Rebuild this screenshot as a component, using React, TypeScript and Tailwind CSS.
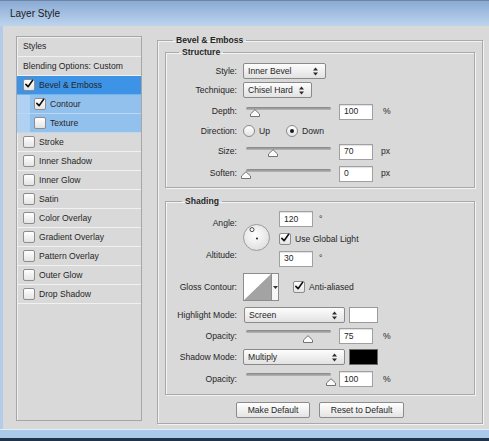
import React from "react";

type Children = { children?: React.ReactNode };

const Check = ({ checked }: { checked?: boolean }) => (
  <span className="flex h-[12px] w-[12px] shrink-0 items-center justify-center rounded-[2px] border border-[#8d8d8d] bg-gradient-to-b from-white to-[#e4e4e4]">
    {checked && (
      <svg width="12" height="12" viewBox="0 0 12 12" className="-mt-[2px]">
        <path d="M2.2 6.4 L4.9 9.2 L10.4 1.6" fill="none" stroke="#111" strokeWidth="1.9" strokeLinecap="round" strokeLinejoin="round" />
      </svg>
    )}
  </span>
);

type Variant = "plain" | "active" | "sub";

const ListRow = ({ label, checked, variant = "plain", hasBox = true }: { label: string; checked?: boolean; variant?: Variant; hasBox?: boolean }) => {
  const cls =
    variant === "active"
      ? "bg-[#3d93e6] border-[#74b2ee]"
      : variant === "sub"
      ? "bg-[#93c1ee] border-[#bad7f3]"
      : "border-[#f1f1f1]";
  return (
    <div className={`flex h-[19px] items-center border-b ${cls}`}>
      {variant === "sub" ? (
        <div className="h-full w-[13px] shrink-0 bg-[#b0d1f1]" />
      ) : null}
      <div className={variant === "sub" ? "ml-[4px] flex items-center" : "ml-[6px] flex items-center"}>
        {hasBox && <Check checked={checked} />}
        <span className={hasBox ? "ml-[4px]" : ""}>{label}</span>
      </div>
    </div>
  );
};

const UpDown = () => (
  <svg width="5" height="9" viewBox="0 0 5 9">
    <path d="M0 3.6 L2.5 0.6 L5 3.6 Z" fill="#2a2a2a" />
    <path d="M0 5.4 L2.5 8.4 L5 5.4 Z" fill="#2a2a2a" />
  </svg>
);

const Select = ({ value, w }: { value: string; w: string }) => (
  <div className={`flex h-[16px] items-center justify-between rounded-[2px] border border-[#8a8a8a] bg-gradient-to-b from-[#fdfdfd] to-[#e2e2e2] pl-[4px] pr-[7px] ${w}`}>
    <span>{value}</span>
    <UpDown />
  </div>
);

const Input = ({ v }: { v: string }) => (
  <div className="flex h-[16px] w-[34px] shrink-0 items-center border border-[#a0a0a0] bg-white pl-[4px] shadow-[inset_0_1px_1px_rgba(0,0,0,0.12)]">
    {v}
  </div>
);

const Slider = ({ pct }: { pct: number }) => (
  <div className="relative h-[16px] w-[91px] shrink-0">
    <div className="mx-[3px] mt-[3px] h-[3px] rounded-full bg-gradient-to-b from-[#858585] to-[#b8b8b8]" />
    <svg className="absolute top-[5px]" style={{ left: 3 + (pct * 85) / 100 - 5 }} width="10" height="8" viewBox="0 0 10 8">
      <path d="M0.5 7.5 L0.5 5 L5 0.7 L9.5 5 L9.5 7.5 Z" fill="#fbfbfb" stroke="#747474" strokeWidth="1" />
    </svg>
  </div>
);

const Row = ({ label, h, children }: { label: string; h: string } & Children) => (
  <div className={`flex items-center ${h}`}>
    <span className="w-[71px] shrink-0 text-right">{label}</span>
    <div className="ml-[6px] flex items-center">{children}</div>
  </div>
);

const Radio = ({ on }: { on?: boolean }) => (
  <span className="flex h-[12px] w-[12px] items-center justify-center rounded-full border border-[#8a8a8a] bg-gradient-to-b from-white to-[#e3e3e3]">
    {on && <span className="h-[4px] w-[4px] rounded-full bg-[#1a1a1a]" />}
  </span>
);

const Dial = () => (
  <svg width="27" height="27" viewBox="0 0 27 27" className="ml-[6px] mt-[13px] shrink-0">
    <defs>
      <radialGradient id="dg" cx="0.45" cy="0.4" r="0.7">
        <stop offset="0" stopColor="#ffffff" />
        <stop offset="1" stopColor="#dadada" />
      </radialGradient>
    </defs>
    <circle cx="13.5" cy="13.5" r="13" fill="url(#dg)" stroke="#9a9a9a" strokeWidth="1" />
    <circle cx="9" cy="5.6" r="2" fill="#fff" stroke="#333" strokeWidth="0.9" />
    <circle cx="14" cy="14.5" r="1" fill="#222" />
  </svg>
);

const Btn = ({ label, w }: { label: string; w: string }) => (
  <div className={`flex h-[16px] items-center justify-center rounded-[2px] border border-[#8b8b8b] bg-gradient-to-b from-white to-[#e4e4e4] ${w}`}>
    {label}
  </div>
);

const groupBox =
  "min-w-0 border border-[#a9a9a9] shadow-[inset_1px_1px_0_#f3f3f3,1px_1px_0_#f3f3f3]";

export default function App() {
  return (
    <div className="flex h-[441px] w-[489px] flex-col overflow-hidden bg-[#d9d9d9] font-['Liberation_Sans',Arial,sans-serif] text-[8.6px] text-[#262626]">
      <div className="flex h-[26px] shrink-0 items-center border-t border-[#6f86a2] bg-gradient-to-b from-[#8aaad4] to-[#bdd4ed] pl-[10px] text-[10px] text-[#1a1a1a]">
        Layer Style
      </div>

      <div className="flex h-[403px] shrink-0 border-l-[3px] border-[#b3cde8]">
        <div className="ml-[13px] mt-[10px] flex h-[385px] w-[126px] flex-col border border-[#a6a6a6] shadow-[inset_1px_1px_0_#efefef]">
          <div className="flex h-[20px] items-center border-b border-[#f1f1f1] pl-[6px]">Styles</div>
          <ListRow label="Blending Options: Custom" hasBox={false} />
          <ListRow label="Bevel & Emboss" checked variant="active" />
          <ListRow label="Contour" checked variant="sub" />
          <ListRow label="Texture" variant="sub" />
          <ListRow label="Stroke" />
          <ListRow label="Inner Shadow" />
          <ListRow label="Inner Glow" />
          <ListRow label="Satin" />
          <ListRow label="Color Overlay" />
          <ListRow label="Gradient Overlay" />
          <ListRow label="Pattern Overlay" />
          <ListRow label="Outer Glow" />
          <ListRow label="Drop Shadow" />
        </div>

        <fieldset className={`ml-[15px] mt-[9px] h-fit w-[326px] p-0 ${groupBox}`}>
          <legend className="ml-[15px] px-[3px] font-bold leading-[10px]">Bevel &amp; Emboss</legend>

          <fieldset className={`mx-[7px] mt-[2px] pb-[3px] pt-[5px] ${groupBox}`}>
            <legend className="ml-[13px] px-[3px] font-bold leading-[10px]">Structure</legend>
            <Row label="Style:" h="h-[18px]">
              <Select value="Inner Bevel" w="w-[83px]" />
            </Row>
            <Row label="Technique:" h="h-[20px]">
              <Select value="Chisel Hard" w="w-[69px]" />
            </Row>
            <Row label="Depth:" h="h-[23px]">
              <Slider pct={10.6} />
              <div className="ml-[5px]"><Input v="100" /></div>
              <span className="ml-[10px]">%</span>
            </Row>
            <Row label="Direction:" h="h-[17px]">
              <Radio />
              <span className="ml-[4px]">Up</span>
              <span className="ml-[16px]"><Radio on /></span>
              <span className="ml-[4px]">Down</span>
            </Row>
            <Row label="Size:" h="h-[23px]">
              <Slider pct={31.8} />
              <div className="ml-[5px]"><Input v="70" /></div>
              <span className="ml-[8px]">px</span>
            </Row>
            <Row label="Soften:" h="h-[21px]">
              <Slider pct={0} />
              <div className="ml-[5px]"><Input v="0" /></div>
              <span className="ml-[8px]">px</span>
            </Row>
          </fieldset>

          <fieldset className={`mx-[7px] mt-[8px] pb-[7px] pt-[5px] ${groupBox}`}>
            <legend className="ml-[16px] px-[3px] font-bold leading-[10px]">Shading</legend>

            <div className="flex">
              <div className="flex w-[71px] shrink-0 flex-col gap-[8px] text-right">
                <div className="h-[24px] leading-[24px]">Angle:</div>
                <div className="h-[24px] leading-[24px]">Altitude:</div>
              </div>
              <Dial />
              <div className="ml-[9px] flex flex-col">
                <div className="flex items-center">
                  <Input v="120" />
                  <span className="ml-[6px]">°</span>
                </div>
                <div className="mt-[6px] flex items-center">
                  <Check checked />
                  <span className="ml-[4px]">Use Global Light</span>
                </div>
                <div className="mt-[5px] flex items-center">
                  <Input v="30" />
                  <span className="ml-[6px]">°</span>
                </div>
              </div>
            </div>

            <div className="mt-[6px] flex h-[28px] items-center">
              <span className="w-[71px] shrink-0 text-right">Gloss Contour:</span>
              <div className="ml-[6px] flex h-[28px] w-[36px] border border-[#8d8d8d] bg-white">
                <svg width="27" height="26" viewBox="0 0 27 26" className="shrink-0">
                  <path d="M0 26 L27 0 L27 26 Z" fill="#a3a3a3" />
                </svg>
                <div className="flex flex-1 items-center justify-center border-l border-[#8d8d8d] bg-[#f7f7f7]">
                  <svg width="5" height="3" viewBox="0 0 5 3">
                    <path d="M0 0 L5 0 L2.5 3 Z" fill="#333" />
                  </svg>
                </div>
              </div>
              <span className="ml-[14px]"><Check checked /></span>
              <span className="ml-[4px]">Anti-aliased</span>
            </div>

            <div className="mt-[6px] flex h-[16px] items-center">
              <span className="w-[71px] shrink-0 text-right">Highlight Mode:</span>
              <div className="ml-[7px]"><Select value="Screen" w="w-[101px]" /></div>
              <div className="ml-[4px] h-[16px] w-[29px] border border-[#9a9a9a] bg-white" />
            </div>

            <div className="mt-[5px] flex h-[16px] items-center">
              <span className="w-[71px] shrink-0 text-right">Opacity:</span>
              <div className="ml-[6px]"><Slider pct={73} /></div>
              <div className="ml-[5px]"><Input v="75" /></div>
              <span className="ml-[10px]">%</span>
            </div>

            <div className="mt-[5px] flex h-[16px] items-center">
              <span className="w-[71px] shrink-0 text-right">Shadow Mode:</span>
              <div className="ml-[6px]"><Select value="Multiply" w="w-[102px]" /></div>
              <div className="ml-[4px] h-[16px] w-[29px] border border-[#6a6a6a] bg-black" />
            </div>

            <div className="mt-[6px] flex h-[16px] items-center">
              <span className="w-[71px] shrink-0 text-right">Opacity:</span>
              <div className="ml-[6px]"><Slider pct={100} /></div>
              <div className="ml-[5px]"><Input v="100" /></div>
              <span className="ml-[10px]">%</span>
            </div>
          </fieldset>

          <div className="mt-[7px] flex justify-center gap-[9px] pb-[5px]">
            <Btn label="Make Default" w="w-[74px]" />
            <Btn label="Reset to Default" w="w-[85px]" />
          </div>
        </fieldset>
      </div>

      <div className="h-[9px] shrink-0 border-t border-[#e4edf7] bg-[#abcae9]" />
      <div className="h-[3px] shrink-0 bg-[#1f3447]" />
    </div>
  );
}
